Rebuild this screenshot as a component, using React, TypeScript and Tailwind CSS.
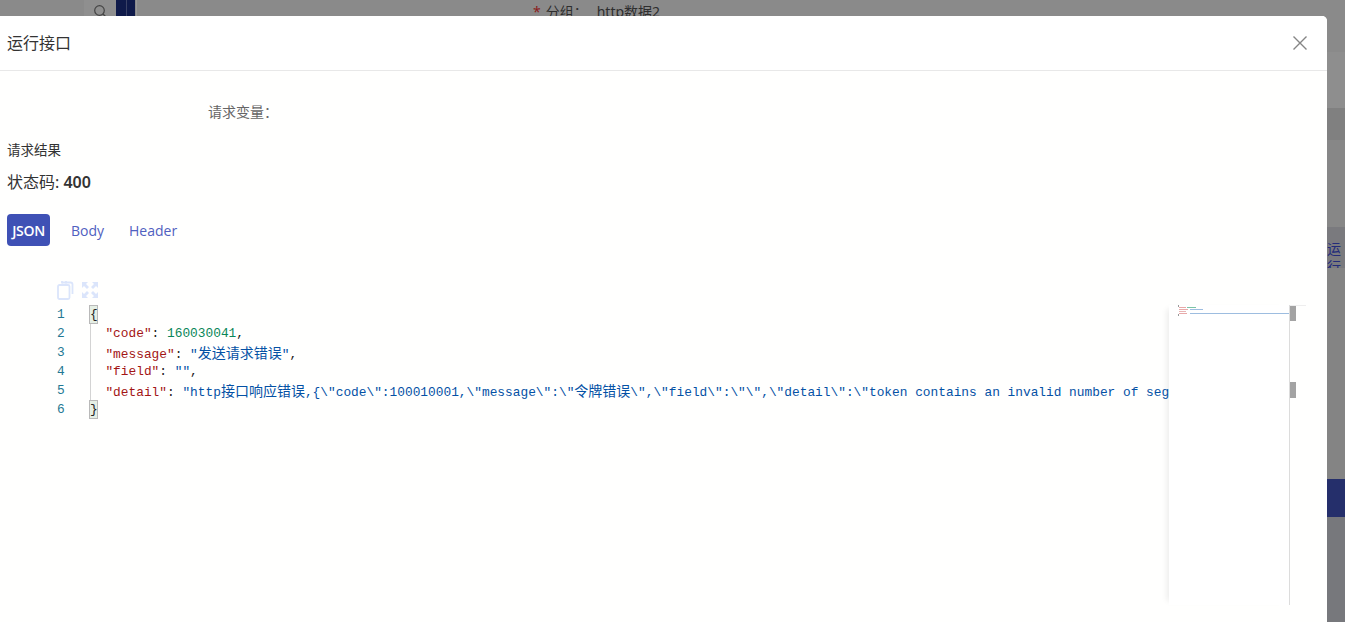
const CJK = "font-['Noto_Sans','Noto_Sans_CJK_SC',sans-serif]";

function T({ c, children }: { c: string; children: string }) {
  // Latin runs are set in mono at a 7.7px advance, CJK runs at 14px
  const parts = children.split(/([\u4e00-\u9fff]+)/);
  return (
    <span className={c}>
      {parts.map((p, i) =>
        /[\u4e00-\u9fff]/.test(p) ? (
          <span key={i} className="font-['Noto_Sans_CJK_SC',sans-serif] text-[14px]">{p}</span>
        ) : (
          <span key={i}>{p}</span>
        )
      )}
    </span>
  );
}

const key = "text-[#a31515]";
const str = "text-[#0451a5]";
const num = "text-[#098658]";
const pun = "text-[#222222]";

const lines = [
  <span className="inline-block h-[19px] w-[9px] border border-[#b9b9b9] bg-[#e5efe5] leading-[17px] -ml-px">{"{"}</span>,
  <><T c={key}>{'  "code"'}</T><T c={pun}>{": "}</T><T c={num}>160030041</T><T c={pun}>,</T></>,
  <><T c={key}>{'  "message"'}</T><T c={pun}>{": "}</T><T c={str}>{'"发送请求错误"'}</T><T c={pun}>,</T></>,
  <><T c={key}>{'  "field"'}</T><T c={pun}>{": "}</T><T c={str}>{'""'}</T><T c={pun}>,</T></>,
  <><T c={key}>{'  "detail"'}</T><T c={pun}>{": "}</T><T c={str}>{'"http接口响应错误,{\\"code\\":100010001,\\"message\\":\\"令牌错误\\",\\"field\\":\\"\\",\\"detail\\":\\"token contains an invalid number of segments\\"}"'}</T></>,
  <span className="inline-block h-[19px] w-[9px] border border-[#b9b9b9] bg-[#e5efe5] leading-[17px] -ml-px">{"}"}</span>,
];

function Minimap() {
  return (
    <svg width="120" height="92" className="block">
      <rect x="9" y="0" width="1" height="2" fill="#999" />
      <rect x="9" y="9" width="1" height="2" fill="#999" />
      <rect x="10" y="2" width="7" height="1" fill="#e8a9a9" />
      <rect x="10" y="4" width="9" height="1" fill="#e8a9a9" />
      <rect x="10" y="6" width="7" height="1" fill="#e8b4b4" />
      <rect x="10" y="8" width="8" height="1" fill="#e8a9a9" />
      <rect x="18" y="2" width="9" height="1" fill="#7cc4a6" />
      <rect x="21" y="4" width="13" height="1" fill="#9dbde0" />
      <rect x="21" y="8" width="99" height="1" fill="#9dbde0" />
    </svg>
  );
}

export default function App() {
  return (
    <div className={`relative h-[622px] w-[1345px] overflow-hidden bg-[#858585] ${CJK}`}>
      {/* dimmed page behind the dialog */}
      <div className="flex h-[622px] flex-col">
        <div className="flex h-[52px] items-start bg-[#8a8a8a]">
          <div className="ml-[84px] flex h-4 w-[32px] items-end justify-center bg-[#8f8f8f] pl-[0px]">
            <svg width="14" height="14" viewBox="0 0 14 14" fill="none" stroke="#444" strokeWidth="1.2" className="mb-[-2px]">
              <circle cx="6.5" cy="6.5" r="4.8" />
              <path d="M10 10l3 3" />
            </svg>
          </div>
          <div className="flex h-4 w-[19px] bg-[#0f1a4a]">
            <div className="ml-[10px] h-4 w-px bg-[#3a4266]" />
          </div>
          <div className="ml-px h-4 w-px bg-[#9a9a9a]" />
          <div className="ml-[396px] flex h-4 items-start overflow-hidden pt-[3px] text-[14px] leading-[18px] text-[#2e2e2e]">
            <span className="mr-[5px] text-[#8a1c1c]">*</span>
            <span>分组：</span>
            <span className="ml-[9px]">http数据2</span>
          </div>
        </div>
        <div className="h-[56px] bg-[#8e8e8e]" />
        <div className="h-[32px] bg-[#808080]" />
        <div className="h-[87px] bg-[#878787]" />
        <div className="flex h-[41px] justify-end bg-[#7a7a7e]">
          <span className="w-[18px] overflow-hidden pt-[13px] text-[14px] leading-[18px] text-[#232c7a]">运行</span>
        </div>
        <div className="h-[211px] bg-[#848484]" />
        <div className="h-[38px] bg-[#252f6b]" />
        <div className="flex-1 bg-[#77787c]" />
      </div>

      {/* dialog */}
      <div className="absolute left-0 top-4 flex h-[606px] w-[1327px] flex-col rounded-tr-[5px] bg-[#fffffe]">
        <div className="flex h-[55px] shrink-0 items-center justify-between rounded-tr-[5px] border-b border-[#e8e8e8] bg-white pl-[7px] pr-[19px]">
          <span className="text-[16px] text-[#333333]">运行接口</span>
          <svg width="16" height="16" viewBox="0 0 16 16" fill="none" stroke="#858585" strokeWidth="1.4">
            <path d="M1.5 1.5l13 13M14.5 1.5l-13 13" />
          </svg>
        </div>

        <div className="flex flex-1 flex-col bg-[#fffffe]">
          <div className="ml-[208px] mt-[31px] h-[20px] text-[14px] leading-[20px] text-[#666666]">请求变量：</div>
          <div className="ml-[7px] mt-[18px] h-[20px] text-[13.5px] leading-[20px] text-[#333333]">请求结果</div>
          <div className="ml-[7px] mt-[11px] h-[22px] text-[16px] leading-[22px] text-[#333333]">
            状态码: <span className="font-semibold">400</span>
          </div>
          <div className="ml-[7px] mt-[21px] flex h-[32px] items-center font-['Open_Sans',sans-serif] text-[14px]">
            <div className="flex h-[32px] w-[43px] items-center justify-center rounded-[4px] bg-[#3f51b5] font-semibold tracking-[-0.3px] text-white">JSON</div>
            <div className="ml-[21px] text-[#5060c0]">Body</div>
            <div className="ml-[25px] text-[#5060c0]">Header</div>
          </div>

          <div className="ml-[57px] mt-[34px] flex h-[19px] items-center gap-[8px]">
            <svg width="17" height="20" viewBox="0 0 17 20" fill="none" stroke="#dbe5fb" strokeWidth="1.8">
              <path d="M5 2.5h8.5a2 2 0 0 1 2 2V14" />
              <rect x="1" y="5" width="11.5" height="14" rx="1.5" />
              <path d="M5 1v2.5M9 1v2.5" />
            </svg>
            <svg width="16" height="16" viewBox="0 0 16 16" fill="#dbe5fb">
              <path d="M0 0h6L4 2l3 3-2 2-3-3-2 2zM16 0v6l-2-2-3 3-2-2 3-3-2-2zM0 16v-6l2 2 3-3 2 2-3 3 2 2zM16 16h-6l2-2-3-3 2-2 3 3 2-2z" />
            </svg>
          </div>

          <div className="ml-[49px] mt-[6px] flex h-[300px] w-[1257px]">
            <div className="relative min-w-0 flex-1 overflow-hidden font-['Liberation_Mono',monospace] text-[12.83px] leading-[19px]">
              <div className="absolute left-[41px] top-[19px] h-[76px] w-px bg-[#d3d3d3]" />
              {lines.map((l, i) => (
                <div key={i} className="flex h-[19px] whitespace-pre">
                  <span className="w-[41px] shrink-0 pl-[8px] font-['Liberation_Mono',monospace] text-[#237893]">{i + 1}</span>
                  <span className={i === 0 || i === 5 ? "text-[#222222]" : ""}>{l}</span>
                </div>
              ))}
            </div>
            <div className="w-[121px] shrink-0 border-r border-[#dcdcdc] bg-white shadow-[-6px_0_6px_-4px_rgba(0,0,0,0.08)]">
              <Minimap />
            </div>
            <div className="flex w-[16px] shrink-0 flex-col border-t border-[#eeeeee]">
              <div className="h-[15px] w-[6px] bg-[#a3a3a3]" />
              <div className="mt-[61px] h-[16px] w-[6px] bg-[#a3a3a3]" />
            </div>
          </div>
        </div>
      </div>
    </div>
  );
}
